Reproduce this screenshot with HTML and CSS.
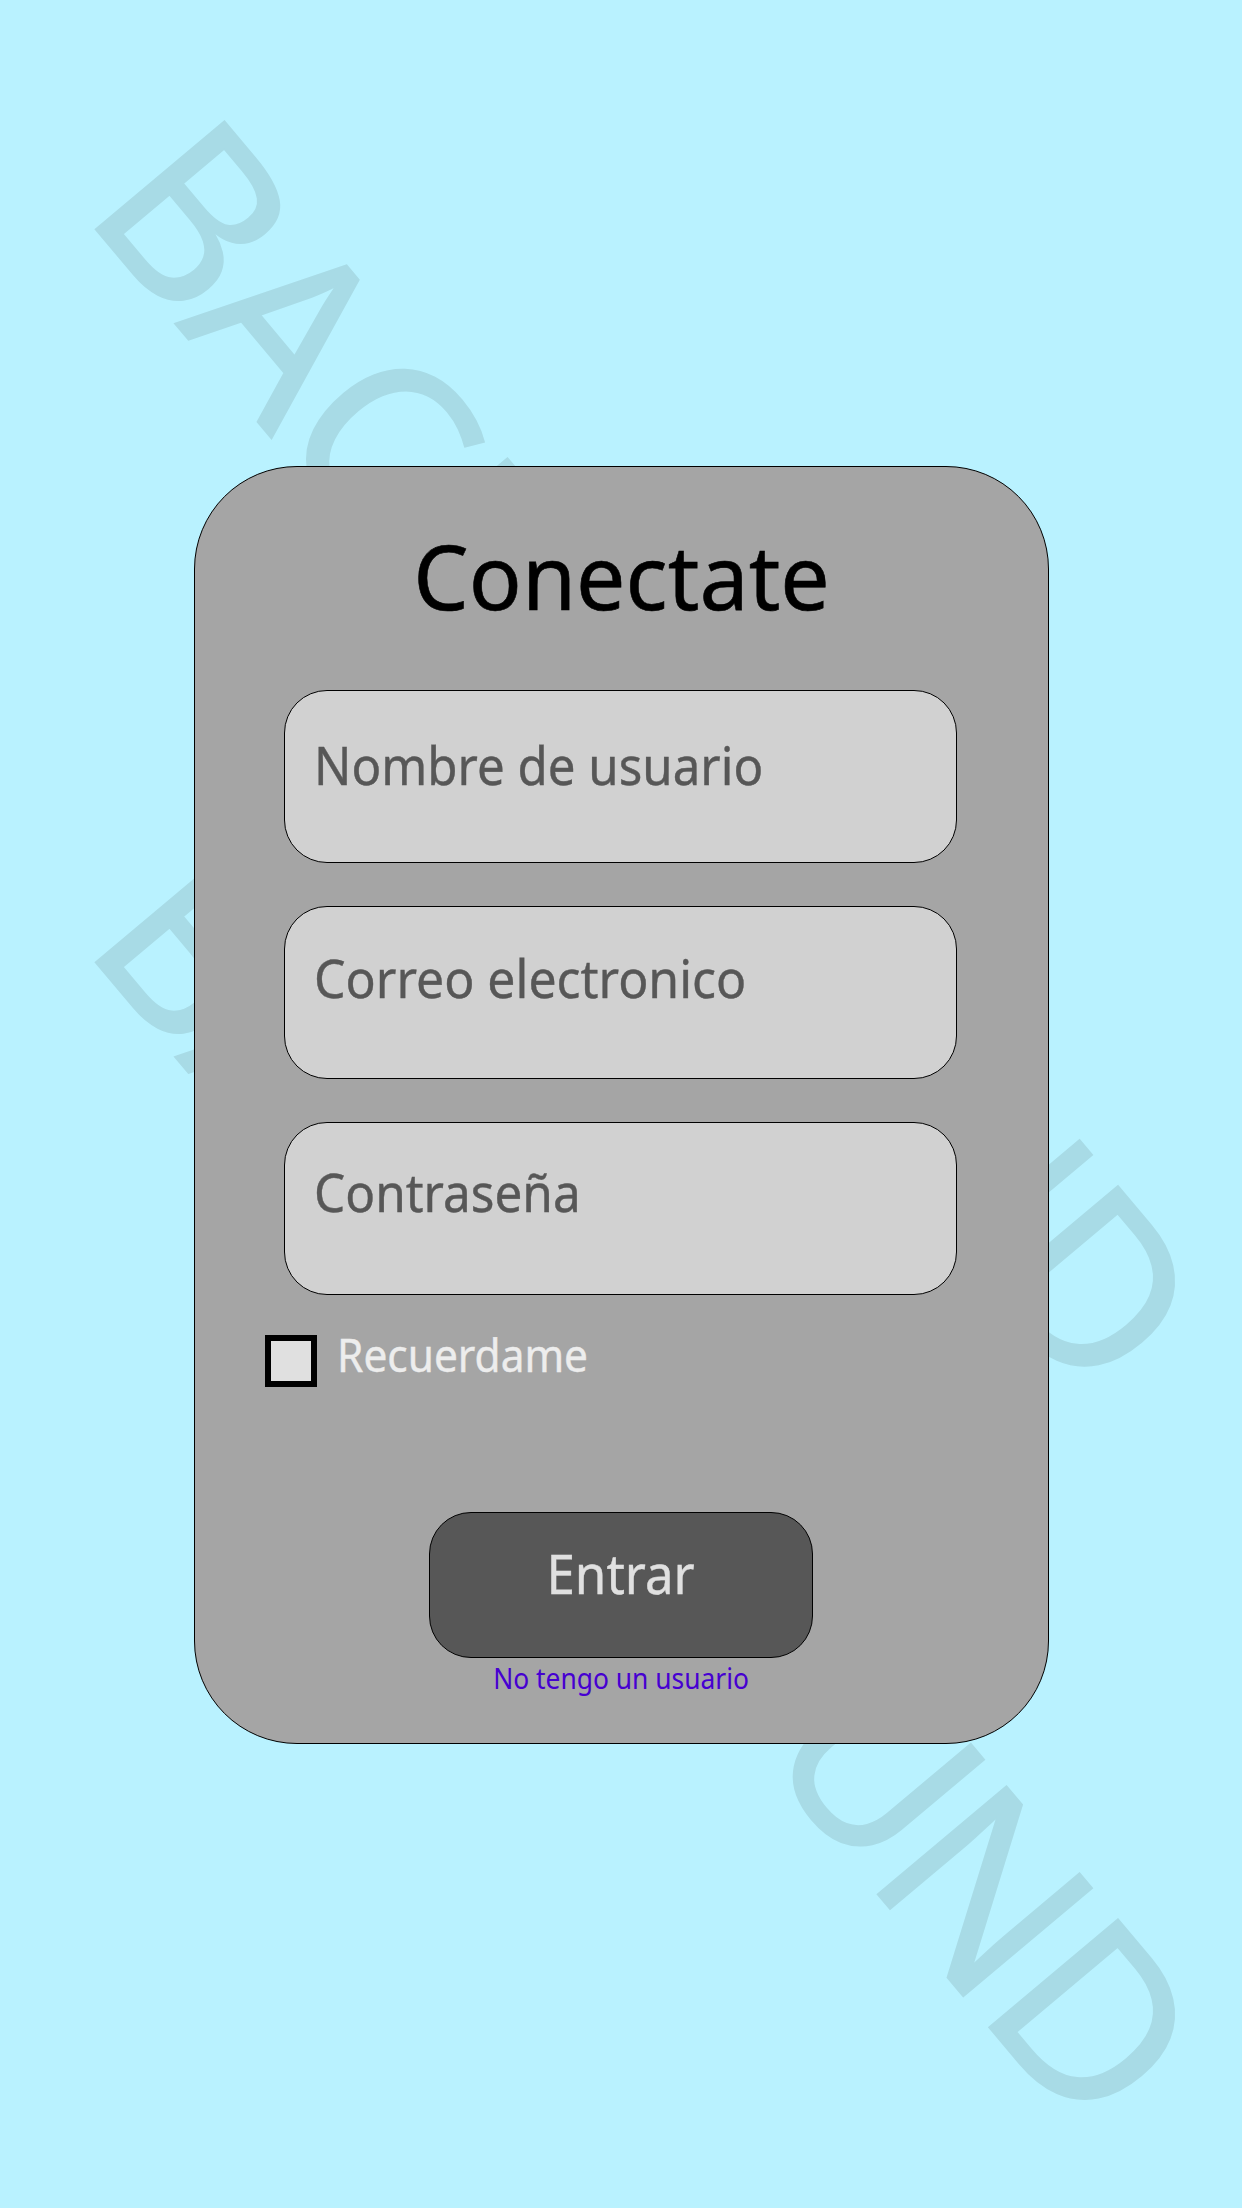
FILE: index.html
```html
<!DOCTYPE html>
<html lang="es">
<head>
<meta charset="utf-8">
<title>Conectate</title>
<link rel="stylesheet" href="styles.css">
</head>
<body>
<svg class="backdrop" viewBox="0 0 1242 2208" aria-hidden="true">
  <g transform="translate(95 228.5) rotate(50)">
    <text x="-22 124 272 418 556 720 858 1032 1194.5 1368">BACKGROUND</text>
  </g>
  <g transform="translate(95 961.7) rotate(50)">
    <text x="-22 124 272 418 556 720 858 1032 1194.5 1368">BACKGROUND</text>
  </g>
</svg>
<main class="card">
  <h1 class="title">Conectate</h1>
  <form class="form">
    <div class="field field-user"><span class="label label-user">Nombre de usuario</span></div>
    <div class="field field-mail"><span class="label label-mail">Correo electronico</span></div>
    <div class="field field-pass"><span class="label label-pass">Contraseña</span></div>
  </form>
  <div class="remember">
    <span class="checkbox"></span>
    <span class="remember-text">Recuerdame</span>
  </div>
  <div class="submit"><span class="submit-text">Entrar</span></div>
  <a class="signup">No tengo un usuario</a>
</main>
</body>
</html>
```
FILE: styles.css
```css
* {
  box-sizing: border-box;
}

body {
  margin: 0;
  height: 2208px;
  padding-top: 466px;
  position: relative;
  overflow: hidden;
  background: #b9f2ff;
  font-family: "Noto Sans", "Open Sans", sans-serif;
}

.backdrop {
  position: absolute;
  top: 0;
  left: 0;
  width: 1242px;
  height: 2208px;
  font-size: 236px;
  fill: #a8dbe6;
  stroke: #a8dbe6;
  stroke-width: 1.5px;
}

.card {
  position: relative;
  display: flex;
  flex-direction: column;
  align-items: center;
  width: 855px;
  height: 1278px;
  margin-left: 194px;
  padding-top: 48px;
  background: #a5a5a5;
  border: 1px solid #000;
  border-radius: 103px;
}

.title {
  margin: 0 0 55px;
  font-size: 90px;
  font-weight: 400;
  line-height: 120px;
  color: #000;
  transform: scaleX(0.975);
  -webkit-text-stroke: 0.6px;
}

.form {
  display: flex;
  flex-direction: column;
  gap: 43px;
  width: 673px;
  margin-right: 2px;
}

.field {
  height: 173px;
  padding-left: 29px;
  background: #d1d1d1;
  border: 1px solid #000;
  border-radius: 43px;
}

.field-user { padding-top: 38px; }
.field-mail { padding-top: 35px; }
.field-pass { padding-top: 33px; }

.label {
  display: block;
  width: max-content;
  font-size: 53px;
  line-height: 72px;
  color: #575757;
  transform-origin: left;
  -webkit-text-stroke: 0.4px;
}

.label-user { transform: scaleX(0.929); }
.label-mail { transform: scaleX(0.942); }
.label-pass { transform: scaleX(0.933); }

.remember {
  display: flex;
  align-self: flex-start;
  gap: 20px;
  height: 63px;
  margin: 29px 0 125px 70px;
}

.checkbox {
  width: 52px;
  height: 52px;
  margin-top: 11px;
  background: #e0e0e0;
  border: 6px solid #000;
}

.remember-text {
  padding-top: 1px;
  font-size: 45px;
  line-height: 60px;
  color: #ededed;
  transform: scaleX(0.943);
  transform-origin: left;
  -webkit-text-stroke: 0.4px;
}

.submit {
  display: flex;
  justify-content: center;
  width: 384px;
  height: 146px;
  margin-right: 1px;
  padding-top: 22px;
  background: #575757;
  border: 1px solid #000;
  border-radius: 42px;
}

.submit-text {
  font-size: 55.5px;
  line-height: 76px;
  color: #e0e0e0;
  transform: scaleX(0.92);
  -webkit-text-stroke: 0.4px;
}

.signup {
  margin-top: 2px;
  font-size: 28.7px;
  line-height: 36px;
  color: #4600d1;
  transform: scaleX(0.92);
}
```
